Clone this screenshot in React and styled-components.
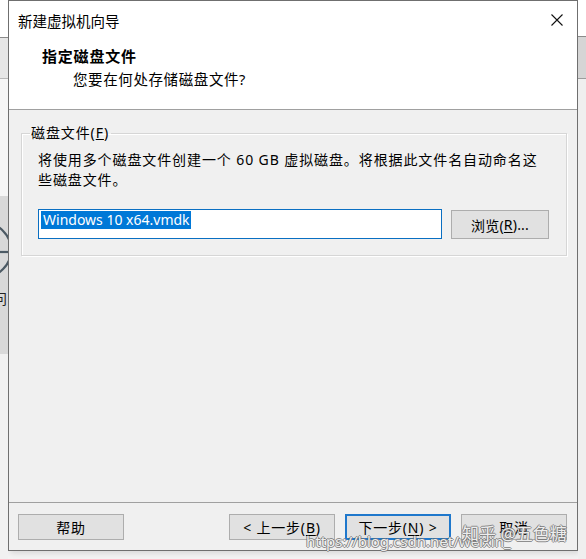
import styled, { createGlobalStyle } from "styled-components"

const GlobalStyle = createGlobalStyle`
  html, body {
    margin: 0;
    padding: 0;
    background: #f3f3f3;
  }
  body {
    font-family: "Noto Sans", "Noto Sans CJK SC", sans-serif;
    color: #000;
  }
`

const Screen = styled.div`
  position: relative;
  display: flex;
  width: 586px;
  height: 559px;
  overflow: hidden;
  background: #f3f3f3;
`

// slivers of the window that sits behind the wizard
const Strip = styled.div`
  display: flex;
  flex-direction: column;
  width: ${(p) => p.$width}px;
  flex-shrink: 0;
  overflow: hidden;
`

const Band = styled.div`
  position: relative;
  height: ${(p) => (p.$h ? `${p.$h}px` : "auto")};
  flex: ${(p) => (p.$h ? "none" : 1)};
  background: ${(p) => p.$bg};
  border-bottom: ${(p) => (p.$line ? `1px solid ${p.$line}` : "none")};
  overflow: hidden;
`

const BackGlyph = styled.span`
  display: block;
  margin: 0 0 0 -7px;
  font-size: 14px;
  line-height: 16px;
  color: #222;
`

const DialogColumn = styled.div`
  display: flex;
  flex-direction: column;
  width: 570px;
  flex-shrink: 0;
`

const Dialog = styled.div`
  display: flex;
  flex-direction: column;
  height: 551px;
  box-sizing: border-box;
  border: 1px solid #6f6f6f;
  background: #f0f0f0;
  box-shadow: 2px 2px 6px rgba(0, 0, 0, 0.12);
`

const TitleBar = styled.div`
  display: flex;
  align-items: center;
  justify-content: space-between;
  height: 38px;
  padding: 0 14px 0 9px;
  background: #fff;
  font-size: 14.5px;
`

const CloseIcon = () => (
  <svg width="12" height="12" viewBox="0 0 12 12">
    <path d="M0.5 0.5 L11.5 11.5 M11.5 0.5 L0.5 11.5" stroke="#111" strokeWidth="1.1" fill="none" />
  </svg>
)

const Header = styled.div`
  display: flex;
  flex-direction: column;
  padding: 7px 0 20px 33px;
  background: #fff;
  border-bottom: 1px solid #a0a0a0;
`

const Heading = styled.div`
  font-size: 15px;
  font-weight: 700;
  letter-spacing: 0.8px;
  line-height: 20px;
`

const SubHeading = styled.div`
  margin: 3px 0 0 31px;
  font-size: 14.5px;
  letter-spacing: 0.6px;
  line-height: 20px;
`

const Body = styled.div`
  flex: 1;
  padding: 13px 10px 0 12px;
`

const GroupBox = styled.fieldset`
  margin: 0;
  padding: 0;
  border: 1px solid #d6d6d6;
  box-shadow: inset 1px 1px 0 #fff, 1px 1px 0 #fff;
`

const Legend = styled.legend`
  margin-left: 8px;
  padding: 0 2px 0 1px;
  font-size: 14px;
  letter-spacing: 0.9px;
  line-height: 20px;
`

const GroupContent = styled.div`
  padding: 7px 16px 16px 16px;
`

const Description = styled.div`
  font-size: 14px;
  letter-spacing: 0.9px;
  line-height: 20px;
  white-space: nowrap;
`

const FileRow = styled.div`
  display: flex;
  align-items: flex-start;
  gap: 9px;
  margin-top: 19px;
`

const TextBox = styled.div`
  display: flex;
  align-items: flex-start;
  width: 404px;
  height: 30px;
  box-sizing: border-box;
  padding: 1px 2px;
  background: #fff;
  border: 1px solid #0a6fc2;
  font-size: 14px;
`

const Selected = styled.span`
  padding: 0 1px 0 2px;
  line-height: 18px;
  background: #0078d7;
  color: #fff;
`

const Button = styled.div`
  display: flex;
  align-items: center;
  justify-content: center;
  width: ${(p) => p.$width || 106}px;
  height: ${(p) => p.$height || 26}px;
  margin-top: ${(p) => p.$top || 0}px;
  box-sizing: border-box;
  background: #e1e1e1;
  border: ${(p) => (p.$default ? "2px solid #1f78cc" : "1px solid #adadad")};
  font-size: 14px;
  letter-spacing: ${(p) => p.$spacing ?? 0.8}px;
  white-space: nowrap;

  & u {
    text-decoration-thickness: 1px;
    text-underline-offset: 2px;
  }
`

const Footer = styled.div`
  display: flex;
  align-items: center;
  gap: 10px;
  padding: 11px 10px 10px 9px;
  border-top: 1px solid #a0a0a0;
`

const Spacer = styled.div`
  flex: 1;
`

const Watermark = styled.div`
  position: absolute;
  left: ${(p) => p.$x}px;
  top: ${(p) => p.$y}px;
  font-size: ${(p) => p.$size}px;
  line-height: 1;
  white-space: nowrap;
  color: rgba(255, 255, 255, 0.9);
  text-shadow:
    1px 0 0 rgba(110, 110, 110, 0.75),
    -1px 0 0 rgba(110, 110, 110, 0.75),
    0 1px 0 rgba(110, 110, 110, 0.75),
    0 -1px 0 rgba(110, 110, 110, 0.75);
  pointer-events: none;
`

const LeftBackdrop = () => (
  <Strip $width={8}>
    <Band $h={37} $bg="#fff" $line="#8a8a8a" />
    <Band $h={40} $bg="#e6e6e6" $line="#b8b8b8" />
    <Band $h={117} $bg="#f6f6f6" />
    <Band $h={95} $bg="#d9d9d9">
      <svg width="8" height="95" viewBox="0 0 8 95">
        <circle cx="-16" cy="54" r="27" stroke="#4c5a64" strokeWidth="2.2" fill="none" />
        <line x1="0" y1="56" x2="8" y2="56" stroke="#4c5a64" strokeWidth="2.2" />
      </svg>
    </Band>
    <Band $h={63} $bg="#d9d9d9">
      <BackGlyph>问</BackGlyph>
    </Band>
    <Band $bg="#f1f1f1" />
  </Strip>
)

const RightBackdrop = () => (
  <Strip $width={8}>
    <Band $h={36} $bg="#fff" $line="#8a8a8a" />
    <Band $h={41} $bg="#d5d5d5" $line="#9c9c9c" />
    <Band $bg="#efefef" />
  </Strip>
)

const App = () => {
  return (
    <>
      <GlobalStyle />
      <Screen>
        <LeftBackdrop />
        <DialogColumn>
          <Dialog>
            <TitleBar>
              <span>新建虚拟机向导</span>
              <CloseIcon />
            </TitleBar>
            <Header>
              <Heading>指定磁盘文件</Heading>
              <SubHeading>您要在何处存储磁盘文件?</SubHeading>
            </Header>
            <Body>
              <GroupBox>
                <Legend>磁盘文件(<u>F</u>)</Legend>
                <GroupContent>
                  <Description>将使用多个磁盘文件创建一个 60 GB 虚拟磁盘。将根据此文件名自动命名这</Description>
                  <Description>些磁盘文件。</Description>
                  <FileRow>
                    <TextBox>
                      <Selected>Windows 10 x64.vmdk</Selected>
                    </TextBox>
                    <Button $width={98} $height={29} $top={1} $spacing={0.2}>
                      浏览(<u>R</u>)...
                    </Button>
                  </FileRow>
                </GroupContent>
              </GroupBox>
            </Body>
            <Footer>
              <Button>帮助</Button>
              <Spacer />
              <Button>
                &lt; 上一步(<u>B</u>)
              </Button>
              <Button $default>
                下一步(<u>N</u>) &gt;
              </Button>
              <Button>取消</Button>
            </Footer>
          </Dialog>
        </DialogColumn>
        <RightBackdrop />
        <Watermark $x={306} $y={534} $size={15}>
          https://blog.csdn.net/weixin_
        </Watermark>
        <Watermark $x={462} $y={525} $size={17}>
          知乎 @五色糖
        </Watermark>
      </Screen>
    </>
  )
}

export default App
